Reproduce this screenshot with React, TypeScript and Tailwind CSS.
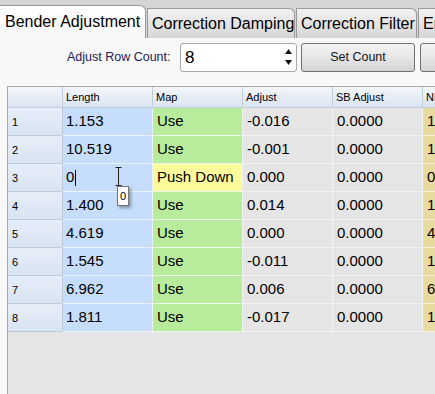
import React from "react";

const rows = [
  { n: "1", len: "1.153", map: "Use", adj: "-0.016", sb: "0.0000", nb: "1" },
  { n: "2", len: "10.519", map: "Use", adj: "-0.001", sb: "0.0000", nb: "1" },
  { n: "3", len: "0", map: "Push Down", adj: "0.000", sb: "0.0000", nb: "0" },
  { n: "4", len: "1.400", map: "Use", adj: "0.014", sb: "0.0000", nb: "1" },
  { n: "5", len: "4.619", map: "Use", adj: "0.000", sb: "0.0000", nb: "4" },
  { n: "6", len: "1.545", map: "Use", adj: "-0.011", sb: "0.0000", nb: "1" },
  { n: "7", len: "6.962", map: "Use", adj: "0.006", sb: "0.0000", nb: "6" },
  { n: "8", len: "1.811", map: "Use", adj: "-0.017", sb: "0.0000", nb: "1" },
];

const font = { fontFamily: '"Liberation Sans", Arial, sans-serif' };

function InactiveTab({ label, w }: { label: string; w: string }) {
  return (
    <div
      className={`${w} h-[30px] ml-[1px] shrink-0 border border-b-0 border-[#9a9a9a] rounded-tr-[6px] bg-gradient-to-b from-[#f2f2f2] to-[#d6d6d6] flex items-center pl-[4px] text-[16px] text-black whitespace-nowrap overflow-hidden`}
    >
      {label}
    </div>
  );
}

export default function App() {
  return (
    <div
      className="w-[435px] h-[394px] overflow-hidden bg-[#f4f4f4] flex flex-col"
      style={font}
    >
      {/* Tab strip */}
      <div className="h-[38px] shrink-0 bg-[#d5d5d5] flex items-end overflow-hidden">
        <div className="w-[146px] h-[33px] shrink-0 border border-b-0 border-l-0 border-[#9a9a9a] rounded-tr-[6px] bg-gradient-to-b from-white to-[#f8f8f8] flex items-center pl-[5px] text-[16px] text-black whitespace-nowrap">
          Bender Adjustment
        </div>
        <InactiveTab label="Correction Damping" w="w-[148px]" />
        <InactiveTab label="Correction Filter" w="w-[121px]" />
        <InactiveTab label="En" w="w-[40px]" />
      </div>

      {/* Panel */}
      <div className="flex-1 flex flex-col bg-[#f8f8f8]">
        <div className="h-[29px] mt-[5px] flex items-stretch shrink-0 overflow-hidden">
          <div className="ml-[67px] w-[113px] shrink-0 flex items-center text-[12.5px] text-[#20205a] whitespace-nowrap">
            Adjust Row Count:
          </div>
          <div className="w-[117px] shrink-0 border border-[#a8a8a8] rounded-[3px] bg-white flex items-center relative">
            <span className="ml-[4px] text-[17px] text-black">8</span>
            <div className="absolute right-[4px] top-[5px] flex flex-col items-center gap-[6px]">
              <svg width="7" height="5" viewBox="0 0 7 5">
                <path d="M0 5 L3.5 0 L7 5 Z" fill="#111" />
              </svg>
              <svg width="7" height="5" viewBox="0 0 7 5">
                <path d="M0 0 L3.5 5 L7 0 Z" fill="#111" />
              </svg>
            </div>
          </div>
          <div className="ml-[4px] w-[114px] shrink-0 border border-[#707070] rounded-[3px] bg-gradient-to-b from-[#f3f3f3] via-[#e6e6e6] to-[#d3d3d3] flex items-center justify-center text-[12.5px] text-[#151515]">
            Set Count
          </div>
          <div className="ml-[5px] w-[40px] shrink-0 border border-[#707070] rounded-[3px] bg-gradient-to-b from-[#f3f3f3] via-[#e6e6e6] to-[#d3d3d3]" />
        </div>

        {/* Table */}
        <div className="mt-[14px] ml-[7px] flex-1 border-l border-t border-[#a9a9a9] bg-[#e5e5e5] overflow-hidden">
          <div className="grid grid-cols-[55px_90px_90px_90px_90px_90px] w-[505px]">
            {/* header */}
            <div className="h-[21px] bg-gradient-to-b from-[#f4f7fb] to-[#dae4f1] border-r border-b border-[#c4cedb]" />
            {["Length", "Map", "Adjust", "SB Adjust", "NB"].map((h) => (
              <div
                key={h}
                className="h-[21px] bg-gradient-to-b from-[#f4f7fb] to-[#dae4f1] border-r border-b border-[#c4cedb] flex items-center pl-[3px] text-[11px] text-black whitespace-nowrap overflow-hidden"
              >
                {h}
              </div>
            ))}
            {rows.map((r) => (
              <React.Fragment key={r.n}>
                <div className="h-[28px] bg-gradient-to-b from-[#e6eef8] to-[#d9e4f2] border-r border-b border-[#bfcadb] flex items-start pt-[6px] pl-[4px] text-[11px] text-black">
                  {r.n}
                </div>
                <div className="h-[28px] bg-[#c6defc] border-r border-b border-[#e9f1fc] flex items-center pl-[3px] text-[15px] text-black relative">
                  {r.len}
                  {r.n === "3" && (
                    <>
                      <span className="w-[1px] h-[16px] bg-black ml-[1px]" />
                      <svg
                        className="absolute left-[52px] top-[3px]"
                        width="7"
                        height="19"
                        viewBox="0 0 7 19"
                      >
                        <path
                          d="M0.5 0.5 H6.5 M3.5 0.5 V18.5 M0.5 18.5 H6.5"
                          stroke="#222"
                          strokeWidth="1"
                          fill="none"
                        />
                      </svg>
                      <div className="absolute left-[54px] top-[22px] w-[12px] h-[20px] bg-white border border-[#767676] shadow-[2px_2px_3px_rgba(0,0,0,0.35)] flex items-center justify-center text-[11px] text-black z-10">
                        0
                      </div>
                    </>
                  )}
                </div>
                <div
                  className={`h-[28px] ${r.map === "Use" ? "bg-[#b9eb9c]" : "bg-[#fefb9d]"} border-r border-b border-[#eef6ea] flex items-center pl-[4px] text-[15px] text-black whitespace-nowrap`}
                >
                  {r.map}
                </div>
                <div className="h-[28px] bg-[#e5e5e5] border-r border-b border-[#f2f2f2] flex items-center pl-[4px] text-[15px] text-black">
                  {r.adj}
                </div>
                <div className="h-[28px] bg-[#e5e5e5] border-r border-b border-[#f2f2f2] flex items-center pl-[4px] text-[15px] text-black">
                  {r.sb}
                </div>
                <div className="h-[28px] bg-[#e7dba0] border-r border-b border-[#f2eed8] flex items-center pl-[4px] text-[15px] text-black">
                  {r.nb}
                </div>
              </React.Fragment>
            ))}
          </div>
        </div>
      </div>
    </div>
  );
}
